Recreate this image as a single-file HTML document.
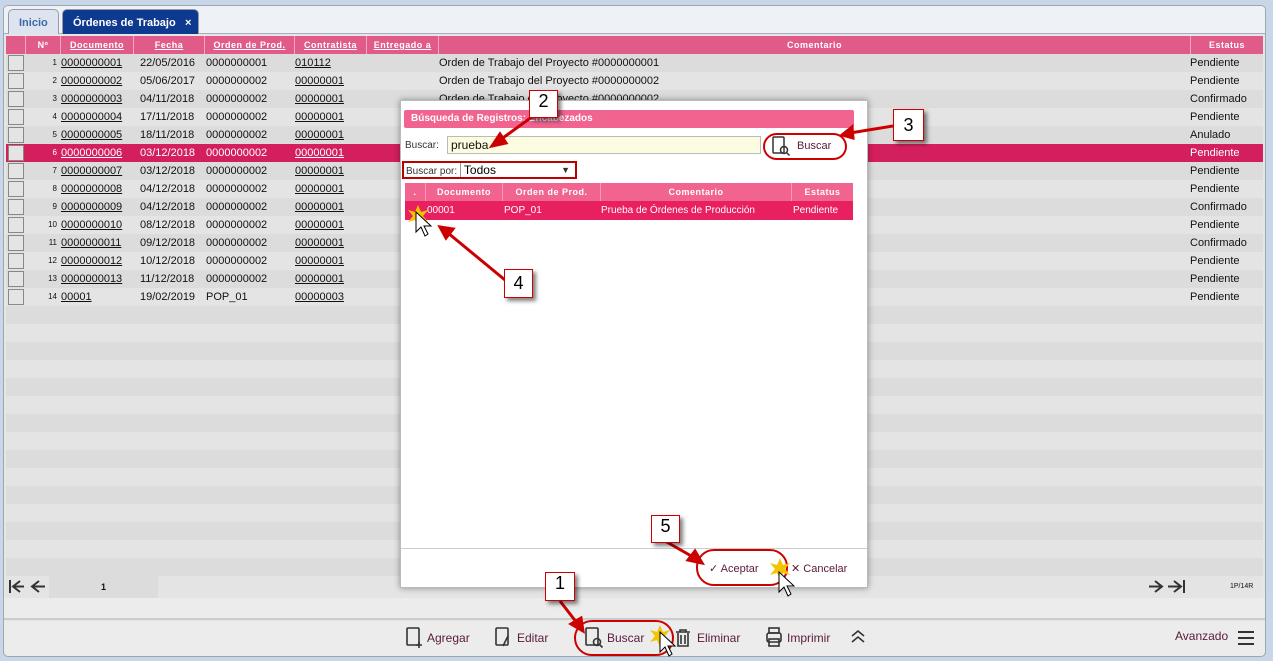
<!DOCTYPE html>
<html><head><meta charset="utf-8"><style>
*{margin:0;padding:0;box-sizing:border-box}
body{width:1273px;height:661px;background:#c9d5e8;font-family:"Liberation Sans","DejaVu Sans",sans-serif;font-size:10px;position:relative;overflow:hidden;color:#111}
.panel{position:absolute;left:3px;top:5px;width:1263px;height:652px;background:#e6e6e6;border:1px solid #9aa;border-radius:5px;overflow:hidden}
.tabs{position:absolute;left:0;top:0;width:100%;height:28px;background:#eef1f6;border-bottom:1px solid #aab}
.tab{position:absolute;top:3px;height:25px;border:1px solid #99a;border-bottom:none;border-radius:5px 5px 0 0;font-weight:bold;font-size:11px;padding:7px 10px;white-space:nowrap}
.t1{left:4px;width:51px;background:#dde4ef;color:#3a6aa8}
.t2{left:58px;width:137px;background:#0d3a8e;color:#fff}
.row{position:absolute;left:2px;width:1257px;height:18px;font-size:11px;line-height:18px}
.row span{position:absolute;white-space:nowrap}
.hd{background:#e05b88;color:#fff;font-weight:bold;font-size:9px;letter-spacing:.5px}
.hd span{text-align:center;border-left:1px solid #f3a9c2;height:18px}
u{text-decoration:underline}
.chk{left:2px!important;top:1px;width:16px;height:16px;border:1px solid #888;background:#e4e4e4}
.sel{background:#d41f5e;color:#fff}
.dlg{position:absolute;left:400px;top:100px;width:468px;height:488px;background:#fff;border:1px solid #bbb;box-shadow:0 0 6px rgba(0,0,0,.4)}
.call{position:absolute;background:#fff;border:1.5px solid #c00;font-size:18px;text-align:center;box-shadow:3px 3px 4px rgba(0,0,0,.5);color:#000}
.tb{position:absolute;top:631px;font-size:12px;color:#5a1a3a}
</style></head><body>
<div class="panel">
<div class="tabs"><div class="tab t1">Inicio</div><div class="tab t2">Órdenes de Trabajo<span style="position:absolute;left:122px">×</span></div></div>
</div>
<div style="position:absolute;left:4px;top:35px;width:1261px">
<div class="row hd" style="top:1px"><span style="left:0;width:19px;border:none"></span><span style="left:19px;width:35px">Nº</span><span style="left:54px;width:73px"><u>Documento</u></span><span style="left:127px;width:71px"><u>Fecha</u></span><span style="left:198px;width:90px"><u>Orden de Prod.</u></span><span style="left:288px;width:72px"><u>Contratista</u></span><span style="left:360px;width:72px"><u>Entregado a</u></span><span style="left:432px;width:752px">Comentario</span><span style="left:1184px;width:73px">Estatus</span></div>
</div>
<div id="rows" style="position:absolute;left:4px;top:54px;width:1261px"></div>
<script>
const d=[["0000000001","22/05/2016","0000000001","010112","Orden de Trabajo del Proyecto #0000000001","Pendiente"],["0000000002","05/06/2017","0000000002","00000001","Orden de Trabajo del Proyecto #0000000002","Pendiente"],["0000000003","04/11/2018","0000000002","00000001","Orden de Trabajo del Proyecto #0000000002","Confirmado"],["0000000004","17/11/2018","0000000002","00000001","","Pendiente"],["0000000005","18/11/2018","0000000002","00000001","","Anulado"],["0000000006","03/12/2018","0000000002","00000001","","Pendiente"],["0000000007","03/12/2018","0000000002","00000001","","Pendiente"],["0000000008","04/12/2018","0000000002","00000001","","Pendiente"],["0000000009","04/12/2018","0000000002","00000001","","Confirmado"],["0000000010","08/12/2018","0000000002","00000001","","Pendiente"],["0000000011","09/12/2018","0000000002","00000001","","Confirmado"],["0000000012","10/12/2018","0000000002","00000001","","Pendiente"],["0000000013","11/12/2018","0000000002","00000001","","Pendiente"],["00001","19/02/2019","POP_01","00000003","","Pendiente"]];
let h="";
for(let i=0;i<29;i++){const bg=i%2?"#e4e4e4":"#dcdcdc";const r=d[i];
if(r){h+=`<div class="row${i==5?' sel':''}" style="top:${i*18}px;${i==5?'':'background:'+bg}"><span class="chk"></span><span style="left:19px;width:32px;text-align:right;font-size:8px">${i+1}</span><span style="left:55px"><u>${r[0]}</u></span><span style="left:134px">${r[1]}</span><span style="left:200px">${r[2]}</span><span style="left:289px"><u>${r[3]}</u></span><span style="left:433px">${r[4]}</span><span style="left:1184px">${r[5]}</span></div>`}
else h+=`<div class="row" style="top:${i*18}px;background:${bg}"></div>`}
document.getElementById('rows').innerHTML=h;
</script>
<div style="position:absolute;left:6px;top:576px;width:1255px;height:22px;background:#e4e4e4"></div>
<div style="position:absolute;left:49px;top:576px;width:109px;height:22px;background:#dcdcdc;font-weight:bold;font-size:9px;text-align:center;line-height:22px">1</div>
<svg style="position:absolute;left:8px;top:578px" width="40" height="18" stroke="#333" stroke-width="2" fill="none"><line x1="2" y1="2" x2="2" y2="15"/><path d="M12 3 L5 8.5 L12 14 M5 8.5 H16"/><path d="M31 3 L24 8.5 L31 14 M24 8.5 H37"/></svg>
<svg style="position:absolute;left:1147px;top:578px" width="40" height="18" stroke="#333" stroke-width="2" fill="none"><path d="M8 3 L15 8.5 L8 14 M2 8.5 H15"/><path d="M27 3 L34 8.5 L27 14 M21 8.5 H34"/><line x1="37" y1="2" x2="37" y2="15"/></svg>
<div style="position:absolute;left:1230px;top:583px;font-size:7px">1P/14R</div>
<div style="position:absolute;left:4px;top:598px;width:1261px;height:22px;background:#ececec;border-bottom:2px solid #ccc"></div>
<div style="position:absolute;left:4px;top:621px;width:1261px;height:35px;background:#ececec;border-radius:0 0 5px 5px"></div>
<svg style="position:absolute;left:0;top:620px" width="1273" height="40" fill="none" stroke="#333" stroke-width="1.6">
<rect x="407" y="8" width="12" height="17" rx="1"/><path d="M419 22 v6 M416 25 h6"/>
<rect x="496" y="8" width="12" height="17" rx="1"/><path d="M508 16 l-5 10"/>
<rect x="586" y="8" width="12" height="17" rx="1"/><circle cx="597" cy="22" r="3.5"/><path d="M599.5 24.5 l3 3"/>
<path d="M676 12 h14 M680 12 v-2 h6 v2 M678 13 v13 h10 v-13 M681 15 v9 M685 15 v9"/>
<rect x="769" y="8" width="10" height="5"/><rect x="767" y="13" width="14" height="9" rx="2"/><rect x="769" y="19" width="10" height="7"/>
<path d="M852 16 l6 -5 l6 5 M852 22 l6 -5 l6 5"/>
<path d="M1238 12 h16 M1238 18 h16 M1238 24 h16" stroke-width="2"/>
</svg>
<div class="tb" style="left:427px">Agregar</div>
<div class="tb" style="left:517px">Editar</div>
<div class="tb" style="left:607px">Buscar</div>
<div class="tb" style="left:697px">Eliminar</div>
<div class="tb" style="left:787px">Imprimir</div>
<div class="tb" style="left:1175px;top:629px">Avanzado</div>
<div style="position:absolute;left:574px;top:620px;width:100px;height:36px;border:2px solid #c00;border-radius:18px"></div>

<div class="dlg">
<div style="position:absolute;left:3px;top:9px;width:450px;height:18px;background:#f0648f;border-radius:2px;color:#fff;font-weight:bold;font-size:10px;line-height:18px;padding-left:7px">Búsqueda de Registros: Encabezados</div>
<div style="position:absolute;left:4px;top:39px;font-size:10px;color:#333">Buscar:</div>
<div style="position:absolute;left:46px;top:35px;width:314px;height:18px;background:#fcfce0;border:1px solid #bbb;font-size:12px;padding-left:3px;line-height:16px">prueba</div>
<div style="position:absolute;left:362px;top:32px;width:84px;height:27px;border:2px solid #c00;border-radius:14px;font-size:11px;color:#5a1a3a;line-height:23px;padding-left:32px">Buscar</div>
<svg style="position:absolute;left:370px;top:34px" width="22" height="22" fill="none" stroke="#333" stroke-width="1.5"><rect x="2" y="2" width="11" height="16" rx="1"/><circle cx="13" cy="15" r="3.5"/><path d="M15.5 17.5 l3 3"/></svg>
<div style="position:absolute;left:1px;top:60px;width:175px;height:18px;border:2px solid #b00;font-size:10px;line-height:14px;padding-left:2px;color:#333">Buscar por: <span style="font-size:12px;color:#000;border-left:1px solid #999;padding-left:3px">Todos</span><span style="position:absolute;right:5px;font-size:9px">▼</span></div>
<div style="position:absolute;left:4px;top:82px;width:448px;height:18px;background:#f0648f;color:#fff;font-weight:bold;font-size:9px;line-height:18px;letter-spacing:.5px">
<span style="position:absolute;left:0;width:20px;text-align:center">.</span><span style="position:absolute;left:20px;width:77px;text-align:center;border-left:1px solid #f9b">Documento</span><span style="position:absolute;left:97px;width:98px;text-align:center;border-left:1px solid #f9b">Orden de Prod.</span><span style="position:absolute;left:195px;width:191px;text-align:center;border-left:1px solid #f9b">Comentario</span><span style="position:absolute;left:386px;width:62px;text-align:center;border-left:1px solid #f9b">Estatus</span></div>
<div style="position:absolute;left:4px;top:100px;width:448px;height:19px;background:#e8205f;color:#fff;font-size:10px;line-height:19px">
<span style="position:absolute;left:22px">00001</span><span style="position:absolute;left:99px">POP_01</span><span style="position:absolute;left:196px">Prueba de Órdenes de Producción</span><span style="position:absolute;left:388px">Pendiente</span></div>
<div style="position:absolute;left:0;top:447px;width:100%;border-top:1px solid #ccc"></div>
<div style="position:absolute;left:295px;top:448px;width:92px;height:37px;border:2px solid #c00;border-radius:18px"></div>
<div style="position:absolute;left:308px;top:461px;font-size:11px;color:#5a1a3a">✓ Aceptar</div>
<div style="position:absolute;left:390px;top:461px;font-size:11px;color:#5a1a3a">✕ Cancelar</div>
</div>

<svg style="position:absolute;left:0;top:0" width="1273" height="661">
<g stroke="#c00" stroke-width="3" fill="#c00">
<line x1="536" y1="114" x2="500" y2="140"/><polygon points="492,146 500,134 506,143"/>
<line x1="893" y1="126" x2="850" y2="133"/><polygon points="842,135 852,127 853,138"/>
<line x1="505" y1="280" x2="448" y2="233"/><polygon points="440,227 453,229 446,238"/>
<line x1="665" y1="541" x2="693" y2="557"/><polygon points="702,563 688,560 695,551"/>
<line x1="560" y1="601" x2="577" y2="623"/><polygon points="583,631 571,624 581,618"/>
</g>
<g fill="#f5c400"><polygon points="418,205 421,212 428,210 423,216 428,222 421,220 418,227 415,220 408,222 413,216 408,210 415,212"/>
<polygon points="780,558 783,565 790,563 785,569 790,575 783,573 780,580 777,573 770,575 775,569 770,563 777,565"/>
<polygon points="660,625 663,632 670,630 665,636 670,642 663,640 660,647 657,640 650,642 655,636 650,630 657,632"/></g>
<g fill="#fff" stroke="#000" stroke-width="1"><polygon points="416,212 416,232 421,227 425,236 428,234 424,226 431,226"/>
<polygon points="779,572 779,592 784,587 788,596 791,594 787,586 794,586"/>
<polygon points="660,632 660,652 665,647 669,656 672,654 668,646 675,646"/></g>
</svg>
<div class="call" style="left:529px;top:90px;width:29px;height:28px">2</div>
<div class="call" style="left:893px;top:109px;width:31px;height:32px;line-height:30px">3</div>
<div class="call" style="left:504px;top:269px;width:29px;height:29px;line-height:27px">4</div>
<div class="call" style="left:651px;top:515px;width:29px;height:28px">5</div>
<div class="call" style="left:545px;top:572px;width:30px;height:29px">1</div>
</body></html>
